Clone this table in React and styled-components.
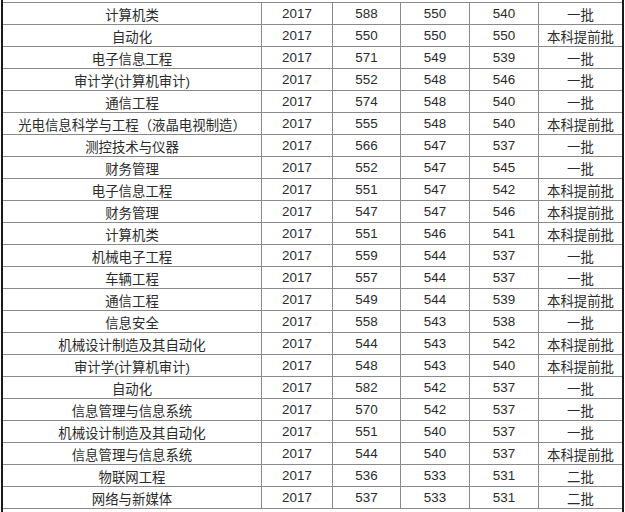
import React from "react";
import styled, { createGlobalStyle } from "styled-components";

const GlobalStyle = createGlobalStyle`
  body {
    margin: 0;
    background: #fff;
  }
`;

const Frame = styled.div`
  margin-left: 1px;
  width: 619px;
  height: 510px;
  padding-top: 2px;
  border-left: 2px solid #1a1a1a;
  border-right: 2px solid #1a1a1a;
  font-family: "Liberation Sans", "Noto Sans CJK SC", sans-serif;
  font-size: 13.4px;
  color: #2b2b2b;
`;

const Table = styled.div`
  border-top: 1px solid #8a8a8a;
`;

const Row = styled.div`
  display: grid;
  grid-template-columns: 259px 71px 68px 69px 69px 83px;
  height: 22px;
  border-bottom: 1px solid #8a8a8a;
  box-sizing: border-box;
`;

const Cell = styled.div`
  display: flex;
  align-items: center;
  justify-content: center;
  white-space: nowrap;
  border-right: ${(p) => (p.$last ? "none" : "1px solid #8a8a8a")};
`;

const rows = [
  ["计算机类", "588", "550", "540", "一批"],
  ["自动化", "550", "550", "550", "本科提前批"],
  ["电子信息工程", "571", "549", "539", "一批"],
  ["审计学(计算机审计)", "552", "548", "546", "一批"],
  ["通信工程", "574", "548", "540", "一批"],
  ["光电信息科学与工程（液晶电视制造）", "555", "548", "540", "本科提前批"],
  ["测控技术与仪器", "566", "547", "537", "一批"],
  ["财务管理", "552", "547", "545", "一批"],
  ["电子信息工程", "551", "547", "542", "本科提前批"],
  ["财务管理", "547", "547", "546", "本科提前批"],
  ["计算机类", "551", "546", "541", "本科提前批"],
  ["机械电子工程", "559", "544", "537", "一批"],
  ["车辆工程", "557", "544", "537", "一批"],
  ["通信工程", "549", "544", "539", "本科提前批"],
  ["信息安全", "558", "543", "538", "一批"],
  ["机械设计制造及其自动化", "544", "543", "542", "本科提前批"],
  ["审计学(计算机审计)", "548", "543", "540", "本科提前批"],
  ["自动化", "582", "542", "537", "一批"],
  ["信息管理与信息系统", "570", "542", "537", "一批"],
  ["机械设计制造及其自动化", "551", "540", "537", "一批"],
  ["信息管理与信息系统", "544", "540", "537", "本科提前批"],
  ["物联网工程", "536", "533", "531", "二批"],
  ["网络与新媒体", "537", "533", "531", "二批"],
];

function App() {
  return (
    <>
      <GlobalStyle />
      <Frame>
        <Table>
          {rows.map(([major, max, min, avg, batch], i) => (
            <Row key={i}>
              <Cell>{major}</Cell>
              <Cell>2017</Cell>
              <Cell>{max}</Cell>
              <Cell>{min}</Cell>
              <Cell>{avg}</Cell>
              <Cell $last>{batch}</Cell>
            </Row>
          ))}
        </Table>
      </Frame>
    </>
  );
}

export default App;
